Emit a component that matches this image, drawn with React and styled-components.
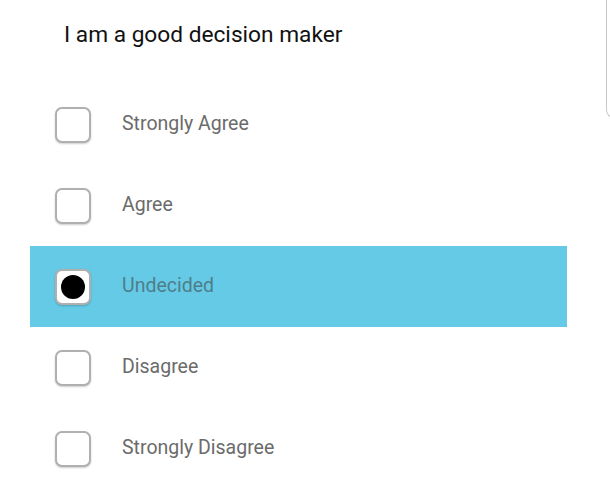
import React, { useState } from "react";
import styled, { createGlobalStyle } from "styled-components";

const Global = createGlobalStyle`
  html, body { margin: 0; padding: 0; background: #ffffff; }
  body { font-family: Roboto, "Noto Sans", sans-serif; overflow: hidden; }
`;

const Page = styled.div`
  width: 610px;
  height: 488px;
  position: relative;
  overflow: hidden;
  background: #fff;
`;

const Question = styled.h1`
  margin: 0;
  padding: 21px 0 0 64px;
  height: 63px;
  box-sizing: border-box;
  font-size: 22.7px;
  font-weight: 400;
  color: #111;
  line-height: 28px;
`;

const List = styled.div`
  display: flex;
  flex-direction: column;
  width: 537px;
  margin: 21px 0 0 30px;
`;

const Row = styled.div`
  display: flex;
  align-items: center;
  height: 81px;
  padding-left: 25px;
  gap: 31px;
  background: ${(p) => (p.$selected ? "#64cae6" : "transparent")};
  cursor: pointer;
`;

const Box = styled.div`
  width: 32px;
  height: 32px;
  border: 2px solid #b0b0b0;
  border-radius: 7px;
  background: #fff;
  box-shadow: 0 1px 2px rgba(0, 0, 0, 0.2);
  display: flex;
  align-items: center;
  justify-content: center;
  flex: none;
`;

const Dot = styled.div`
  width: 24px;
  height: 24px;
  border-radius: 50%;
  background: #000;
`;

const Label = styled.span`
  font-size: 19.5px;
  padding-bottom: 2px;
  color: ${(p) => (p.$selected ? "#4f7e8b" : "#6b6b6b")};
`;

const ScrollEdge = styled.div`
  position: absolute;
  top: -10px;
  left: 606px;
  width: 10px;
  height: 128px;
  border-left: 1.5px solid #c8c8c8;
  border-bottom: 1.5px solid #c8c8c8;
  border-bottom-left-radius: 8px;
  box-sizing: border-box;
`;

const options = ["Strongly Agree", "Agree", "Undecided", "Disagree", "Strongly Disagree"];

export default function App() {
  const [sel, setSel] = useState(2);
  return (
    <Page>
      <Global />
      <Question>I am a good decision maker</Question>
      <List>
        {options.map((o, i) => (
          <Row key={o} $selected={i === sel} onClick={() => setSel(i)}>
            <Box>{i === sel && <Dot />}</Box>
            <Label $selected={i === sel}>{o}</Label>
          </Row>
        ))}
      </List>
      <ScrollEdge />
    </Page>
  );
}
